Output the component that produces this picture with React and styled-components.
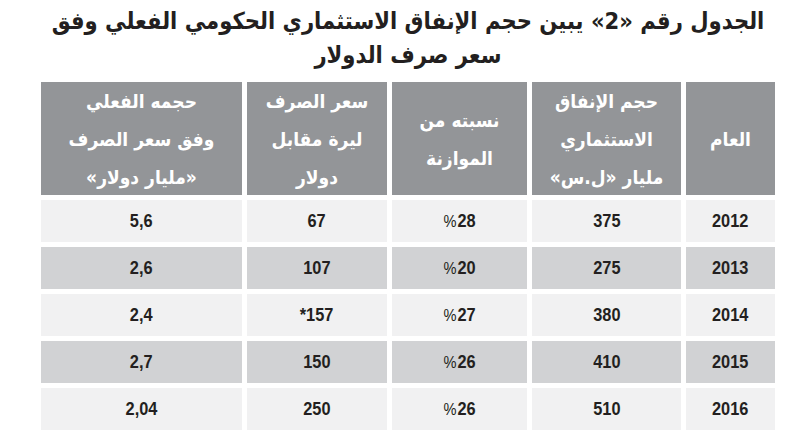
import React from "react";
import styled, { createGlobalStyle } from "styled-components";

const Global = createGlobalStyle`
  html, body { margin: 0; padding: 0; background: #ffffff; }
  body { width: 800px; height: 436px; overflow: hidden; }
`;

const Page = styled.div`
  width: 734px;
  margin-left: 41px;
  padding-top: 4px;
  direction: rtl;
`;

const Title = styled.h1`
  margin: 0 0 10px 0;
  font-family: "DejaVu Sans Condensed", "DejaVu Sans", sans-serif;
  font-stretch: condensed;
  font-weight: bold;
  font-size: 23.5px;
  line-height: 34px;
  color: #231f20;
  text-align: center;
  white-space: nowrap;
`;

const Grid = styled.div`
  display: grid;
  grid-template-columns: 89px 149px 135px 140px 201px;
  grid-auto-rows: 42px;
  grid-template-rows: 113px;
  gap: 5px;
`;

const HeadCell = styled.div`
  background: #939598;
  color: #ffffff;
  display: flex;
  align-items: center;
  justify-content: center;
  text-align: center;
  font-family: "DejaVu Sans Condensed", "DejaVu Sans", sans-serif;
  font-stretch: condensed;
  font-weight: bold;
  font-size: 19px;
  line-height: 38px;
`;

const Cell = styled.div`
  background: ${(p) => (p.$dark ? "#d1d2d4" : "#f1f1f2")};
  color: #231f20;
  display: flex;
  align-items: center;
  justify-content: center;
  direction: ltr;
`;

const Num = styled.span`
  display: inline-block;
  font-family: "Liberation Sans", Arial, sans-serif;
  font-weight: bold;
  font-size: 19px;
  transform: scaleX(0.86);
`;

const Pct = styled.span`
  font-weight: normal;
  font-size: 17px;
  margin-right: 1px;
`;

const headers = [
  ["العام"],
  ["حجم الإنفاق", "الاستثماري", "مليار «ل.س»"],
  ["نسبته من", "الموازنة"],
  ["سعر الصرف", "ليرة مقابل", "دولار"],
  ["حجمه الفعلي", "وفق سعر الصرف", "«مليار دولار»"],
];

const rows = [
  ["2012", "375", "28", "67", "5,6"],
  ["2013", "275", "20", "107", "2,6"],
  ["2014", "380", "27", "*157", "2,4"],
  ["2015", "410", "26", "150", "2,7"],
  ["2016", "510", "26", "250", "2,04"],
];

export default function App() {
  return (
    <>
      <Global />
      <Page>
        <Title>
          الجدول رقم «2» يبين حجم الإنفاق الاستثماري الحكومي الفعلي وفق
          <br />
          سعر صرف الدولار
        </Title>
        <Grid>
          {headers.map((lines, i) => (
            <HeadCell key={i}>
              <div>
                {lines.map((l, j) => (
                  <div key={j}>{l}</div>
                ))}
              </div>
            </HeadCell>
          ))}
          {rows.map((r, ri) =>
            r.map((v, ci) => (
              <Cell key={ri + "-" + ci} $dark={ri % 2 === 1}>
                <Num>
                  {ci === 2 ? (
                    <>
                      <Pct>%</Pct>
                      {v}
                    </>
                  ) : (
                    v
                  )}
                </Num>
              </Cell>
            ))
          )}
        </Grid>
      </Page>
    </>
  );
}
